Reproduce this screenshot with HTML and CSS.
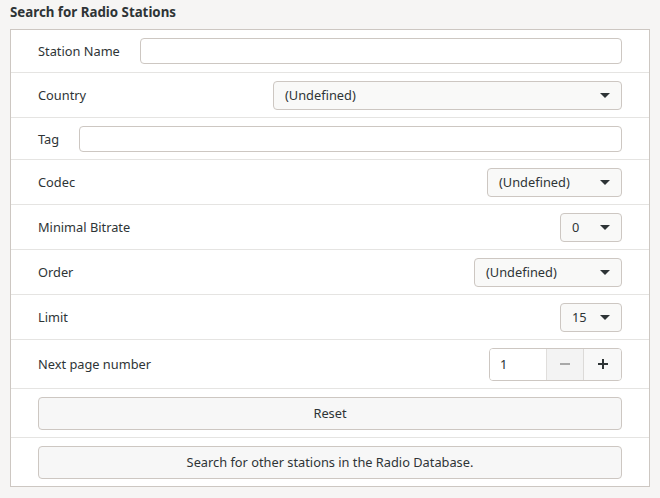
FILE: index.html
```html
<!DOCTYPE html>
<html>
<head>
<meta charset="utf-8">
<link rel="stylesheet" href="styles.css">
</head>
<body>
<div class="page">
  <div class="title">Search for Radio Stations</div>
  <div class="list">
    <div class="row r-entry">
      <span class="label">Station Name</span>
      <div class="entry grow"></div>
    </div>
    <div class="row r-combo">
      <span class="label">Country</span>
      <div class="combo w-country"><span>(Undefined)</span><i class="arrow"></i></div>
    </div>
    <div class="row r-entry r-tag">
      <span class="label">Tag</span>
      <div class="entry grow"></div>
    </div>
    <div class="row r-combo">
      <span class="label">Codec</span>
      <div class="combo w-codec"><span>(Undefined)</span><i class="arrow"></i></div>
    </div>
    <div class="row r-combo">
      <span class="label">Minimal Bitrate</span>
      <div class="combo w-small"><span>0</span><i class="arrow"></i></div>
    </div>
    <div class="row r-combo">
      <span class="label">Order</span>
      <div class="combo w-order"><span>(Undefined)</span><i class="arrow"></i></div>
    </div>
    <div class="row r-combo">
      <span class="label">Limit</span>
      <div class="combo w-small"><span>15</span><i class="arrow"></i></div>
    </div>
    <div class="row r-big">
      <span class="label">Next page number</span>
      <div class="spin">
        <div class="spin-entry">1</div>
        <div class="spin-btn minus"><svg width="12" height="12" viewBox="0 0 12 12"><rect x="1" y="5" width="10" height="2" fill="#a8a8a8"/></svg></div>
        <div class="spin-btn plus"><svg width="12" height="12" viewBox="0 0 12 12"><rect x="1" y="5" width="10" height="2" fill="#2e3436"/><rect x="5" y="1" width="2" height="10" fill="#2e3436"/></svg></div>
      </div>
    </div>
    <div class="row r-big">
      <div class="button">Reset</div>
    </div>
    <div class="row r-big last">
      <div class="button">Search for other stations in the Radio Database.</div>
    </div>
  </div>
</div>
</body>
</html>
```

FILE: styles.css
```css
html, body {
  margin: 0;
  padding: 0;
  background: #f6f5f4;
}
body {
  font-family: "Noto Sans", "Open Sans", sans-serif;
  font-size: 12.8px;
  color: #2e3436;
  width: 660px;
  height: 498px;
  overflow: hidden;
}
.page {
  padding: 0 10px;
}
.title {
  font-weight: bold;
  font-size: 13.3px;
  height: 29px;
  line-height: 24px;
}
.list {
  border: 1px solid #cdc7c2;
  background: #ffffff;
  display: flex;
  flex-direction: column;
}
.row {
  display: flex;
  align-items: center;
  padding: 0 27px;
  border-bottom: 1px solid #e5e4e2;
  box-sizing: border-box;
}
.row.last {
  border-bottom: none;
}
.r-entry { height: 43px; }
.r-tag { height: 42px; }
.r-combo { height: 45px; justify-content: space-between; }
.r-big { height: 49px; justify-content: space-between; }
.r-big.last { height: 48px; }
.label {
  white-space: nowrap;
  margin-right: 20px;
}
.entry {
  height: 26px;
  border: 1px solid #cdc7c2;
  border-radius: 4px;
  background: #fff;
  box-sizing: border-box;
}
.grow { flex: 1; }
.combo {
  height: 29px;
  box-sizing: border-box;
  border: 1px solid #cdc7c2;
  border-radius: 4px;
  background: #f9f9f8;
  display: flex;
  align-items: center;
  justify-content: space-between;
  padding: 0 11px 0 11px;
}
.w-country { width: 349px; }
.w-codec { width: 135px; }
.w-order { width: 148px; }
.w-small { width: 62px; }
.arrow {
  width: 0;
  height: 0;
  border-left: 5px solid transparent;
  border-right: 5px solid transparent;
  border-top: 5px solid #2e3436;
}
.spin {
  display: flex;
  height: 33px;
  border: 1px solid #cdc7c2;
  border-radius: 4px;
  overflow: hidden;
  box-sizing: border-box;
}
.spin-entry {
  width: 57px;
  padding-left: 10px;
  box-sizing: border-box;
  background: #fff;
  display: flex;
  align-items: center;
  border-right: 1px solid #e0dedc;
}
.spin-btn {
  width: 37px;
  display: flex;
  align-items: center;
  justify-content: center;
  box-sizing: border-box;
}
.spin-btn.minus {
  background: #f3f3f3;
  border-right: 1px solid #dcdad8;
}
.spin-btn.plus {
  background: #f8f8f8;
}
.button {
  flex: 1;
  height: 33px;
  box-sizing: border-box;
  border: 1px solid #cdc7c2;
  border-radius: 4px;
  background: #f7f7f7;
  display: flex;
  align-items: center;
  justify-content: center;
}
```
